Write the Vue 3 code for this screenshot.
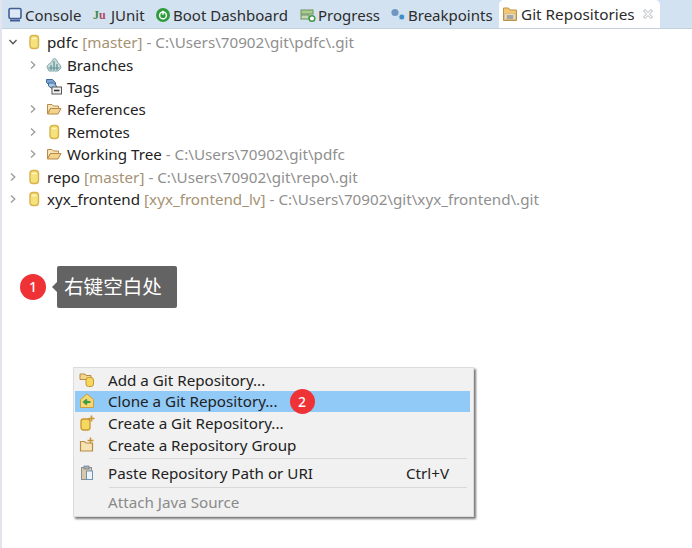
<template>
  <div class="view">
    <div class="tabbar">
      <div v-for="tab in tabs" :key="tab.label" class="tab" :style="{ width: tab.width + 'px' }">
        <svg v-if="tab.icon === 'console'" class="ico" viewBox="0 0 16 16">
          <rect x="2" y="1.500" width="12" height="10" rx="1.500" fill="#dfe9f5" stroke="#3f5f95" stroke-width="1.600" />
          <path d="M3 13.500h10" stroke="#3f5f95" stroke-width="2" />
        </svg>
        <span v-else-if="tab.icon === 'junit'" class="junit"><i>J</i><b>u</b></span>
        <svg v-else-if="tab.icon === 'boot'" class="ico" viewBox="0 0 16 16">
          <circle cx="8" cy="8" r="7" fill="#2f9b3c" />
          <circle cx="8" cy="8.400" r="3.400" fill="none" stroke="#fff" stroke-width="1.500" />
          <path d="M8 3.800v4" stroke="#fff" stroke-width="1.500" />
        </svg>
        <svg v-else-if="tab.icon === 'progress'" class="ico" viewBox="0 0 16 16">
          <rect x="1" y="3" width="12" height="4" fill="#a9cf8f" stroke="#6d8f5a" />
          <rect x="1" y="8" width="8" height="4" fill="#c6d9b8" stroke="#6d8f5a" />
          <circle cx="12" cy="11.500" r="2.800" fill="#fff" stroke="#3e9b45" stroke-width="1.500" />
        </svg>
        <svg v-else class="ico" viewBox="0 0 16 16">
          <circle cx="5" cy="5.500" r="3.600" fill="#6f97bf" />
          <circle cx="11.800" cy="10" r="3" fill="#3f8fc4" stroke="#c7dcec" />
        </svg>
        <span>{{ tab.label }}</span>
      </div>
      <div class="tab active">
        <svg class="ico" viewBox="0 0 16 16">
          <path d="M1.500 2h5l1.500 2h6.500v10.500h-13z" fill="#f0c877" stroke="#c08f3c" />
          <rect x="3" y="8" width="10" height="5.500" fill="#fbf6e4" stroke="#b5a98a" stroke-width=".6" />
          <path d="M4.500 10h7M4.500 12h7" stroke="#555" stroke-width="1" />
        </svg>
        <span>Git Repositories</span>
        <svg class="close" viewBox="0 0 12 12">
          <path d="M1.500 3 3 1.500 6 4.500 9 1.500 10.500 3 7.500 6 10.500 9 9 10.500 6 7.500 3 10.500 1.500 9 4.500 6z" fill="#fff" stroke="#aeb4ba" />
        </svg>
      </div>
    </div>

    <div class="tree">
      <div v-for="row in rows" :key="row.name" class="row" :class="{ child: row.child }">
        <svg class="twisty" viewBox="0 0 10 10">
          <path v-if="row.arrow === 'open'" d="M1.500 3 5 6.800 8.500 3" fill="none" stroke="#555" stroke-width="1.300" />
          <path v-else-if="row.arrow" d="M3 1.500 6.800 5 3 8.500" fill="none" stroke="#9a9a9a" stroke-width="1.300" />
        </svg>
        <svg v-if="row.icon === 'repo'" class="ico tree-ico" viewBox="0 0 16 16">
          <rect x="4" y="1.500" width="8.500" height="13" rx="3" fill="#f6e27c" stroke="#d8b24a" stroke-width="1.400" />
          <path d="M6 4.500h4.500" stroke="#fff6c4" stroke-width="1.300" />
        </svg>
        <svg v-else-if="row.icon === 'folder'" class="ico tree-ico" viewBox="0 0 16 16">
          <path d="M1.500 3.500h4.500l1.500 1.500h5v2.500h-8l-3 5.500z" fill="#f6e3b5" stroke="#b98b45" />
          <path d="M4.500 7.500h10.500l-3 5.500h-10.500z" fill="#f3d28e" stroke="#b98b45" />
        </svg>
        <svg v-else-if="row.icon === 'branches'" class="ico tree-ico" viewBox="0 0 16 16">
          <path d="M1 10c1-4 4-3 5-6 1-3 4-3 5 0 1 3 4 3 4 7l-3 3H3z" fill="#c9dcdc" stroke="#7fa6a8" />
          <path d="M5 13V8M8 13V4M11 13V7M2.500 11h11" stroke="#5f8f96" stroke-width="1.200" />
        </svg>
        <svg v-else class="ico tree-ico" viewBox="0 0 16 16">
          <path d="M.5 .5h6l3 3v4h-5l-4-4z" fill="#7ba3cf" stroke="#3f6a9a" />
          <path d="M2.500 4h5l3 3v3h-4l-4-3z" fill="#a9c6e2" stroke="#3f6a9a" />
          <rect x="6" y="8" width="9.500" height="7" fill="#f2f2f2" stroke="#555" />
          <path d="M8 11.500h5.500" stroke="#333" stroke-width="1.600" />
        </svg>
        <span class="name">{{ row.name }}</span>
        <span v-if="row.branch" class="branch">[{{ row.branch }}]</span>
        <span v-if="row.path" class="path">- {{ row.path }}</span>
      </div>
    </div>

    <div class="step step-one">
      <span class="badge">1</span>
      <div class="tip">右键空白处</div>
    </div>

    <div class="menu">
      <template v-for="item in menu" :key="item.label">
        <div class="item" :class="{ selected: item.selected, disabled: item.disabled }">
          <svg v-if="item.icon === 'add'" class="ico menu-ico" viewBox="0 0 16 16">
            <path d="M1 2h5l1 1.500h5v4H1z" fill="#f3d58e" stroke="#b98b45" />
            <rect x="7" y="5.500" width="7.500" height="9" rx="2.500" fill="#f6d860" stroke="#c9962f" />
          </svg>
          <svg v-else-if="item.icon === 'clone'" class="ico menu-ico" viewBox="0 0 16 16">
            <path d="M1.500 6.500 8 1l6.500 5.500v8H1.500z" fill="#f3d873" stroke="#c9a03f" />
            <path d="M11.500 9H5.500M8 6.500 5 9l3 2.500" fill="none" stroke="#3f9a45" stroke-width="2" />
          </svg>
          <svg v-else-if="item.icon === 'create'" class="ico menu-ico" viewBox="0 0 16 16">
            <rect x="2" y="4" width="9" height="11" rx="2.500" fill="#f6d860" stroke="#c9962f" stroke-width="1.300" />
            <path d="M12.500 .5v6M9.500 3.500h6" stroke="#c9962f" stroke-width="1.600" />
          </svg>
          <svg v-else-if="item.icon === 'group'" class="ico menu-ico" viewBox="0 0 16 16">
            <path d="M1.500 4.500h4l1.500 1.500h6.500v8h-12z" fill="#f6e3b5" stroke="#b98b45" stroke-width="1.200" />
            <path d="M11.500 .5v6M8.500 3.500h6" stroke="#c9962f" stroke-width="1.500" />
          </svg>
          <svg v-else-if="item.icon === 'paste'" class="ico menu-ico" viewBox="0 0 16 16">
            <rect x="2.500" y="2.500" width="10" height="12" fill="#d9c8a5" stroke="#8a8f96" />
            <rect x="5" y="1" width="5" height="3" fill="#a3b0bd" stroke="#6f7a85" stroke-width=".7" />
            <rect x="7.500" y="6" width="6" height="8.500" fill="#eef3f8" stroke="#6f93b5" />
          </svg>
          <span v-else class="ico menu-ico"></span>
          <span class="label">{{ item.label }}</span>
          <span v-if="item.shortcut" class="shortcut">{{ item.shortcut }}</span>
          <span v-if="item.selected" class="badge menu-badge">2</span>
        </div>
        <div v-if="item.sep" class="sep"></div>
      </template>
    </div>
  </div>
</template>

<script setup>
const tabs = [
  { label: 'Console', icon: 'console', width: 86 },
  { label: 'JUnit', icon: 'junit', width: 62 },
  { label: 'Boot Dashboard', icon: 'boot', width: 145 },
  { label: 'Progress', icon: 'progress', width: 90 },
  { label: 'Breakpoints', icon: 'breakpoints', width: 116 },
]

const rows = [
  { name: 'pdfc', icon: 'repo', arrow: 'open', branch: 'master', path: 'C:\\Users\\70902\\git\\pdfc\\.git' },
  { name: 'Branches', icon: 'branches', arrow: 'closed', child: true },
  { name: 'Tags', icon: 'tags', child: true },
  { name: 'References', icon: 'folder', arrow: 'closed', child: true },
  { name: 'Remotes', icon: 'repo', arrow: 'closed', child: true },
  { name: 'Working Tree', icon: 'folder', arrow: 'closed', child: true, path: 'C:\\Users\\70902\\git\\pdfc' },
  { name: 'repo', icon: 'repo', arrow: 'closed', branch: 'master', path: 'C:\\Users\\70902\\git\\repo\\.git' },
  { name: 'xyx_frontend', icon: 'repo', arrow: 'closed', branch: 'xyx_frontend_lv', path: 'C:\\Users\\70902\\git\\xyx_frontend\\.git' },
]

const menu = [
  { label: 'Add a Git Repository...', icon: 'add' },
  { label: 'Clone a Git Repository...', icon: 'clone', selected: true },
  { label: 'Create a Git Repository...', icon: 'create' },
  { label: 'Create a Repository Group', icon: 'group', sep: true },
  { label: 'Paste Repository Path or URI', icon: 'paste', shortcut: 'Ctrl+V', sep: true },
  { label: 'Attach Java Source', disabled: true },
]
</script>

<style>
html, body { margin: 0; background: #fff; }
</style>

<style scoped>
.view {
  position: relative;
  width: 692px;
  height: 548px;
  overflow: hidden;
  box-sizing: border-box;
  border-left: 2px solid #e3e5ee;
  font-family: "Noto Sans", "Noto Sans CJK SC", sans-serif;
  font-size: 15.2px;
  color: #222;
  background: #fff;
}
.ico { width: 16px; height: 16px; flex: none; display: block; }

.tabbar {
  display: flex;
  height: 29px;
  box-sizing: border-box;
  padding-top: 2px;
  margin-left: -2px;
  background: #d3e2f1;
  border-bottom: 1px solid #c3d0de;
  font-size: 15px;
}
.tab { display: flex; align-items: center; gap: 2px; padding-left: 7px; box-sizing: border-box; white-space: nowrap; color: #2c2c2c; flex: none; }
.junit { width: 16px; font-size: 12px; font-family: "Liberation Serif", serif; font-weight: 700; white-space: nowrap; }
.junit i { color: #3c8a3c; font-style: normal; }
.junit b { color: #b04a5e; }
.tab.active {
  width: 161px;
  height: 28px;
  margin-top: -2px;
  padding-left: 3px;
  gap: 3px;
  background: #fff;
  border-radius: 5px 5px 0 0;
  font-size: 15.3px;
}
.close { width: 12px; height: 12px; margin-left: 4px; }

.tree { padding-top: 2px; }
.row { display: flex; align-items: center; height: 22.4px; padding-left: 6px; white-space: nowrap; }
.row.child { padding-left: 26px; }
.twisty { width: 10px; height: 10px; flex: none; }
.tree-ico { margin: 0 5px 0 8px; }
.name { color: #222; }
.branch { margin-left: 4px; color: #a59273; }
.path { margin-left: 4px; color: #8f8f8f; }

.step { position: absolute; display: flex; align-items: center; }
.step-one { left: 18px; top: 266px; }
.badge {
  width: 26px;
  height: 26px;
  border-radius: 50%;
  background: #ef3235;
  color: #fff;
  font-size: 14px;
  font-weight: 500;
  line-height: 26px;
  text-align: center;
  flex: none;
}
.tip {
  position: relative;
  margin-left: 11px;
  width: 120px;
  height: 42px;
  box-sizing: border-box;
  padding-left: 7px;
  line-height: 42px;
  background: #636363;
  border-radius: 2px;
  color: #fff;
  font-size: 19.6px;
}
.tip::before {
  content: "";
  position: absolute;
  left: -5px;
  top: 16px;
  border: 5px solid transparent;
  border-left: 0;
  border-right-color: #636363;
}

.menu {
  position: absolute;
  left: 71px;
  top: 367px;
  width: 401px;
  height: 150px;
  box-sizing: border-box;
  padding: 1px 3px 0 1px;
  background: #f1f1f1;
  border: 1px solid #dcdcdc;
  box-shadow: 2px 2px 2px #7b7b7b;
  font-size: 15.2px;
}
.item { display: flex; align-items: center; height: 21.6px; padding-left: 4px; white-space: nowrap; }
.item.selected { background: #91c9f7; }
.item.disabled { color: #8a8a8a; }
.menu-ico { margin-right: 13px; }
.label { flex: none; }
.shortcut { margin-left: auto; margin-right: 21px; }
.menu-badge { margin-left: 12px; width: 25px; height: 25px; line-height: 25px; }
.sep { height: 1px; margin: 3px 3px 3px 34px; background: #d9d9d9; }
</style>
